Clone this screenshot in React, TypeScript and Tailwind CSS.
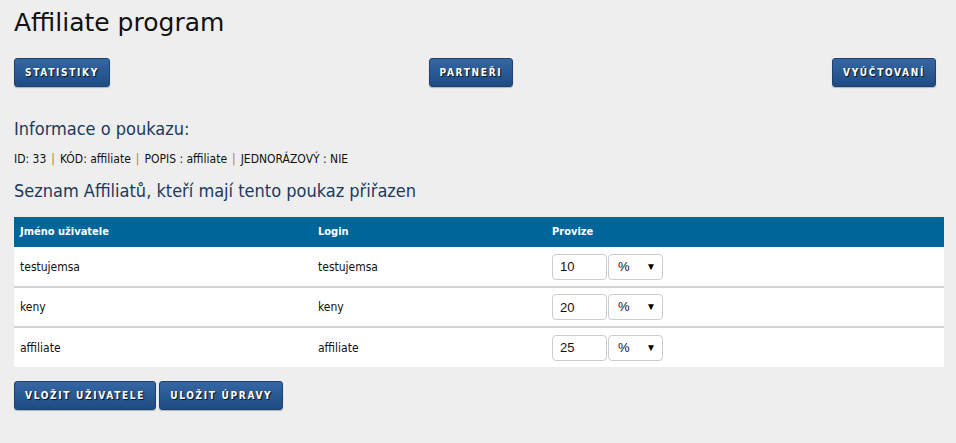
import { useState } from "react";

type Affiliate = { name: string; login: string; provize: string; unit: string };

const initialRows: Affiliate[] = [
  { name: "testujemsa", login: "testujemsa", provize: "10", unit: "%" },
  { name: "keny", login: "keny", provize: "20", unit: "%" },
  { name: "affiliate", login: "affiliate", provize: "25", unit: "%" },
];

const font = "font-['Tahoma','DejaVu_Sans_Condensed','DejaVu_Sans',sans-serif]";

function BlueButton({ label }: { label: string }) {
  return (
    <button
      className={`h-[29px] rounded-[3px] border border-[#1b4272] bg-gradient-to-b from-[#3567a3] to-[#1e4b84] px-[10px] text-[10px] font-bold uppercase tracking-[1.7px] text-white shadow-[0_1px_1px_rgba(0,0,0,0.25)] [text-shadow:1px_1px_1px_rgba(0,0,0,0.8)] ${font}`}
    >
      {label}
    </button>
  );
}

function Sep() {
  return <span className="mx-[5px] text-[#b07a3a]">|</span>;
}

export default function App() {
  const [rows, setRows] = useState(initialRows);

  const update = (i: number, key: "provize" | "unit", v: string) =>
    setRows((r) => r.map((row, j) => (j === i ? { ...row, [key]: v } : row)));

  return (
    <div className={`min-h-[443px] w-[956px] bg-[#eeeeee] px-[14px] pr-[12px] pt-[5px] ${font}`}>
      <h1 className="font-['DejaVu_Sans',sans-serif] text-[25px] leading-[36px] text-[#111]">Affiliate program</h1>

      {/* Navigation */}
      <div className="mt-[17px] flex justify-between pr-[8px]">
        <BlueButton label="Statistiky" />
        <BlueButton label="Partneři" />
        <BlueButton label="Vyúčtovaní" />
      </div>

      {/* Voucher info */}
      <h2 className="mt-[30px] text-[18px] leading-[24px] text-[#1b3a60]">Informace o poukazu:</h2>
      <p className="mt-[10px] text-[12px] leading-[16px] text-[#111]">
        ID: 33<Sep />KÓD: affiliate<Sep />POPIS : affiliate<Sep />JEDNORÁZOVÝ : NIE
      </p>
      <h2 className="mt-[12px] text-[18px] leading-[24px] text-[#1b3a60]">
        Seznam Affiliatů, kteří mají tento poukaz přiřazen
      </h2>

      <table className="mt-[14px] w-[930px] border-collapse bg-white text-left text-[12px] text-[#111]">
        <thead>
          <tr className="h-[30px] bg-[#006699] text-[11px] text-white">
            <th className="w-[304px] pl-[6px] font-bold">Jméno uživatele</th>
            <th className="w-[234px] font-bold">Login</th>
            <th className="font-bold">Provize</th>
          </tr>
        </thead>
        <tbody>
          {rows.map((r, i) => (
            <tr key={r.login} className={`h-[40px] ${i < rows.length - 1 ? "border-b-2 border-[#d3d3d3]" : ""}`}>
              <td className="pl-[6px]">{r.name}</td>
              <td>{r.login}</td>
              <td>
                <div className="flex items-center gap-[1px] font-['Liberation_Sans',Arial,sans-serif] text-[13px]">
                  <input
                    value={r.provize}
                    onChange={(e) => update(i, "provize", e.target.value)}
                    className="h-[26px] w-[55px] rounded-[4px] border border-[#cccccc] bg-white px-[7px] text-[#111] outline-none"
                  />
                  <div className="relative h-[26px] w-[55px]">
                    <select
                      value={r.unit}
                      onChange={(e) => update(i, "unit", e.target.value)}
                      className="h-full w-full appearance-none rounded-[4px] border border-[#cccccc] bg-white pl-[9px] text-[#111] outline-none"
                    >
                      <option value="%">%</option>
                      <option value="Kč">Kč</option>
                    </select>
                    <span className="pointer-events-none absolute right-[7px] top-[5px] text-[10px] text-black">▼</span>
                  </div>
                </div>
              </td>
            </tr>
          ))}
        </tbody>
      </table>

      <div className="mt-[14px] flex gap-[3px]">
        <BlueButton label="Vložit uživatele" />
        <BlueButton label="Uložit úpravy" />
      </div>
    </div>
  );
}
